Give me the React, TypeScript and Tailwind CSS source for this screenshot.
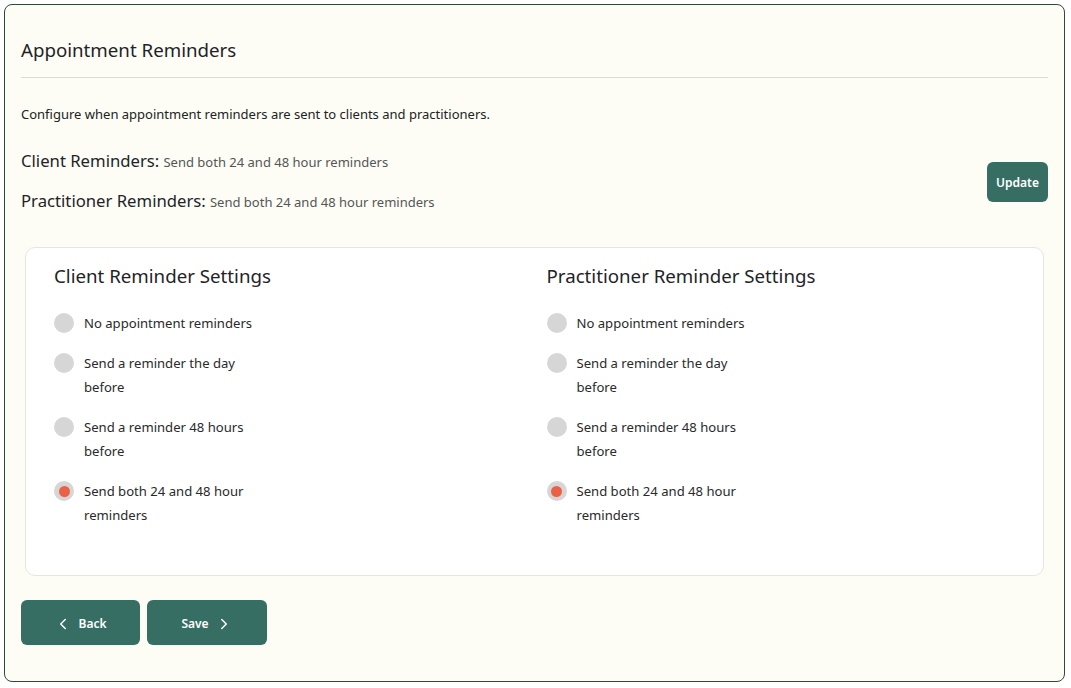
import React from "react";
import { ChevronLeft, ChevronRight } from "lucide-react";

const options = [
  "No appointment reminders",
  "Send a reminder the day before",
  "Send a reminder 48 hours before",
  "Send both 24 and 48 hour reminders",
];

function Radio({ checked }: { checked: boolean }) {
  return (
    <span className="mt-[2px] flex h-[20px] w-[20px] shrink-0 items-center justify-center rounded-full bg-[#d6d6d6]">
      {checked && <span className="h-[11px] w-[11px] rounded-full bg-[#ea6146]" />}
    </span>
  );
}

function Column({ title }: { title: string }) {
  return (
    <div>
      <h2 className="text-[18.7px] leading-[28px] text-[#1f2328]">{title}</h2>
      <div className="mt-[21px] flex flex-col gap-[16px]">
        {options.map((o, i) => (
          <label key={o} className="flex items-start gap-[10px]">
            <Radio checked={i === 3} />
            <span className="max-w-[176px] text-[13.1px] leading-[24px] text-[#2a2a2a]">{o}</span>
          </label>
        ))}
      </div>
    </div>
  );
}

export default function App() {
  return (
    <div
      className="min-h-[688px] bg-white pb-[6px] pl-[4px] pr-[6px] pt-[4px]"
      style={{ fontFamily: '"Noto Sans", "Open Sans", sans-serif' }}
    >
      <div className="h-[678px] rounded-[8px] border border-[#2f4a36] bg-[#fdfdf5] px-[16px] pt-[31px]">
        <div className="border-b border-[#dcdcd6] pb-[13px]">
          <h1 className="text-[18.7px] leading-[28px] text-[#1f2328]">Appointment Reminders</h1>
        </div>
        <p className="mt-[26px] text-[13px] leading-[20px] text-[#222]">
          Configure when appointment reminders are sent to clients and practitioners.
        </p>
        <div className="mt-[25px] flex items-center justify-between">
          <div className="flex flex-col gap-[15px]">
            <div className="leading-[24px]">
              <span className="text-[16.7px] text-[#1f2328]">Client Reminders:</span>{" "}
              <span className="text-[13px] text-[#555]">Send both 24 and 48 hour reminders</span>
            </div>
            <div className="leading-[24px]">
              <span className="text-[16.7px] text-[#1f2328]">Practitioner Reminders:</span>{" "}
              <span className="text-[13px] text-[#555]">Send both 24 and 48 hour reminders</span>
            </div>
          </div>
          <button className="h-[40px] w-[61px] rounded-[6px] bg-[#376e64] pt-[2px] text-[12px] font-semibold text-white">
            Update
          </button>
        </div>
        <div className="mx-[4px] mt-[33px] grid h-[329px] grid-cols-2 gap-[24px] rounded-[10px] border border-[#e6e6e1] bg-white px-[28px] pt-[14px]">
          <Column title="Client Reminder Settings" />
          <Column title="Practitioner Reminder Settings" />
        </div>
        <div className="mt-[24px] flex gap-[7px]">
          <button className="flex h-[45px] w-[119px] items-center justify-center gap-[6px] rounded-[6px] bg-[#376e64] pt-[2px] text-[12px] font-semibold text-white">
            <ChevronLeft size={18} strokeWidth={2} />
            Back
          </button>
          <button className="flex h-[45px] w-[120px] items-center justify-center gap-[6px] rounded-[6px] bg-[#376e64] pt-[2px] text-[12px] font-semibold text-white">
            Save
            <ChevronRight size={18} strokeWidth={2} />
          </button>
        </div>
      </div>
    </div>
  );
}
